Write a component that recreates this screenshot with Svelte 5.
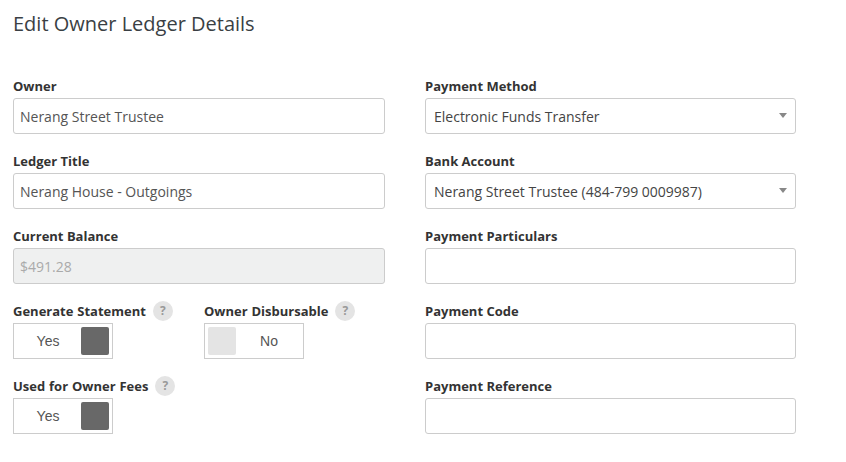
<script>
  const left = [
    { label: 'Owner', value: 'Nerang Street Trustee' },
    { label: 'Ledger Title', value: 'Nerang House - Outgoings' },
    { label: 'Current Balance', value: '$491.28', disabled: true }
  ];
  const right = [
    { label: 'Payment Method', value: 'Electronic Funds Transfer', select: true },
    { label: 'Bank Account', value: 'Nerang Street Trustee (484-799 0009987)', select: true },
    { label: 'Payment Particulars', value: '' },
    { label: 'Payment Code', value: '' },
    { label: 'Payment Reference', value: '' }
  ];
</script>

{#snippet toggle(label, on)}
  <div class="toggle-field">
    <div class="label-row">
      <span class="label">{label}</span>
      <span class="help">?</span>
    </div>
    <div class="toggle">
      {#if on}
        <span class="toggle-text yes">Yes</span>
        <span class="knob on"></span>
      {:else}
        <span class="knob off"></span>
        <span class="toggle-text no">No</span>
      {/if}
    </div>
  </div>
{/snippet}

{#snippet field(f)}
  <div class="field">
    <div class="label">{f.label}</div>
    <div class="input" class:disabled={f.disabled} class:select={f.select}>
      <span>{f.value}</span>
      {#if f.select}<span class="caret"></span>{/if}
    </div>
  </div>
{/snippet}

<main class="page">
  <h1>Edit Owner Ledger Details</h1>
  <div class="columns">
    <section class="col">
      {#each left as f}{@render field(f)}{/each}
      <div class="toggles">
        {@render toggle('Generate Statement', true)}
        {@render toggle('Owner Disbursable', false)}
      </div>
      <div class="toggles">
        {@render toggle('Used for Owner Fees', true)}
      </div>
    </section>
    <section class="col">
      {#each right as f}{@render field(f)}{/each}
    </section>
  </div>
</main>

<style>
  :global(body) {
    margin: 0;
    background: #fff;
    font-family: "Open Sans", "Liberation Sans", sans-serif;
    color: #333;
  }
  .page {
    padding: 10px 0 0 13px;
    width: 833px;
    height: 451px;
    box-sizing: border-box;
  }
  h1 {
    margin: 0;
    font-size: 20px;
    line-height: 28px;
    font-weight: 400;
    color: #3a3f44;
  }
  .columns {
    display: flex;
    gap: 40px;
    margin-top: 41px;
  }
  .col {
    width: 372px;
    display: flex;
    flex-direction: column;
    gap: 20px;
  }
  .col:last-child { width: 371px; }
  .label {
    font-size: 13px;
    font-weight: 700;
    line-height: 15px;
    color: #333;
    display: block;
    margin-bottom: 4px;
    white-space: nowrap;
  }
  .input {
    height: 36px;
    box-sizing: border-box;
    border: 1px solid #ccc;
    border-radius: 3px;
    padding: 0 6px;
    font-size: 14px;
    color: #555;
    display: flex;
    align-items: center;
    justify-content: space-between;
    background: #fff;
  }
  .select { padding: 1px 8px 0 8px; color: #444; }
  .disabled { background: #eff0f0; color: #aaa; }
  .caret {
    width: 0;
    height: 0;
    border-left: 4px solid transparent;
    border-right: 4px solid transparent;
    border-top: 5px solid #888;
    margin-top: -2px;
  }
  .toggles { display: flex; }
  .toggle-field { width: 191px; flex: none; }
  .label-row { display: flex; align-items: flex-start; gap: 7px; word-spacing: 0.5px; }
  .help {
    width: 20px;
    height: 20px;
    border-radius: 50%;
    background: #e4e4e4;
    color: #999;
    font-size: 12px;
    font-weight: 700;
    line-height: 20px;
    text-align: center;
    margin-top: -3px;
    margin-bottom: -2px;
  }
  .toggle {
    width: 100px;
    height: 36px;
    box-sizing: border-box;
    border: 1px solid #ccc;
    display: flex;
    align-items: center;
    padding: 0 3px;
    justify-content: space-between;
  }
  .toggle-text {
    flex: 1;
    text-align: center;
    font-family: "Liberation Sans", Arial, sans-serif;
    font-size: 14px;
    color: #555;
  }
  .yes { padding-right: 2px; }
  .no { padding-left: 2px; }
  .knob {
    width: 28px;
    height: 28px;
    border-radius: 2px;
    flex: none;
  }
  .on { background: #686868; }
  .off { background: #e4e4e4; }
</style>
